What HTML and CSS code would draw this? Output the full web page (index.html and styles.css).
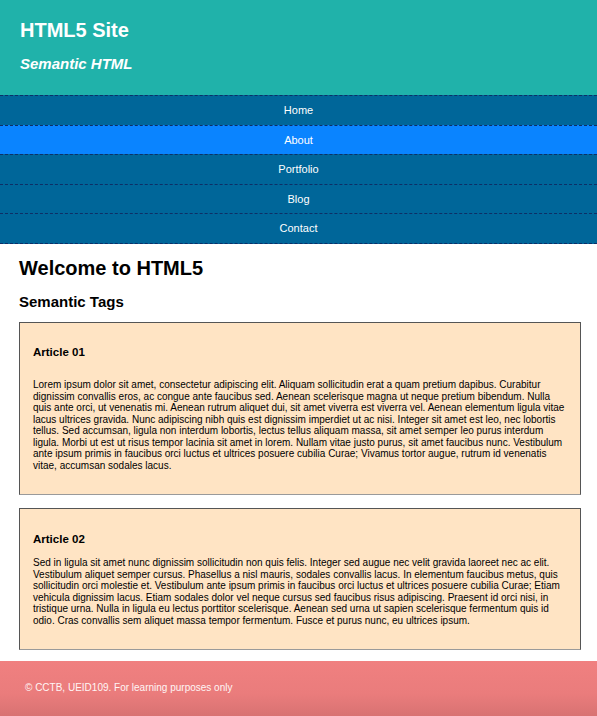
FILE: index.html
```html
<!DOCTYPE html>
<html lang="en">
<head>
<meta charset="utf-8">
<title>HTML5 Site</title>
<link rel="stylesheet" href="styles.css">
</head>
<body>
<header class="site-header">
  <h1 class="site-title">HTML5 Site</h1>
  <h2 class="site-subtitle">Semantic HTML</h2>
</header>
<nav class="site-nav">
  <ul class="nav-list">
    <li class="nav-item"><a class="nav-link" href="#">Home</a></li>
    <li class="nav-item nav-item-active"><a class="nav-link" href="#">About</a></li>
    <li class="nav-item"><a class="nav-link" href="#">Portfolio</a></li>
    <li class="nav-item"><a class="nav-link" href="#">Blog</a></li>
    <li class="nav-item"><a class="nav-link" href="#">Contact</a></li>
  </ul>
</nav>
<main class="content">
  <h1 class="page-title">Welcome to HTML5</h1>
  <h2 class="section-title">Semantic Tags</h2>
  <article class="article">
    <h3 class="article-title article-title-spaced">Article 01</h3>
    <p class="article-text">Lorem ipsum dolor sit amet, consectetur adipiscing elit. Aliquam sollicitudin erat a quam pretium dapibus. Curabitur dignissim convallis eros, ac congue ante faucibus sed. Aenean scelerisque magna ut neque pretium bibendum. Nulla quis ante orci, ut venenatis mi. Aenean rutrum aliquet dui, sit amet viverra est viverra vel. Aenean elementum ligula vitae lacus ultrices gravida. Nunc adipiscing nibh quis est dignissim imperdiet ut ac nisi. Integer sit amet est leo, nec lobortis tellus. Sed accumsan, ligula non interdum lobortis, lectus tellus aliquam massa, sit amet semper leo purus interdum ligula. Morbi ut est ut risus tempor lacinia sit amet in lorem. Nullam vitae justo purus, sit amet faucibus nunc. Vestibulum ante ipsum primis in faucibus orci luctus et ultrices posuere cubilia Curae; Vivamus tortor augue, rutrum id venenatis vitae, accumsan sodales lacus.</p>
  </article>
  <article class="article">
    <h3 class="article-title">Article 02</h3>
    <p class="article-text">Sed in ligula sit amet nunc dignissim sollicitudin non quis felis. Integer sed augue nec velit gravida laoreet nec ac elit. Vestibulum aliquet semper cursus. Phasellus a nisl mauris, sodales convallis lacus. In elementum faucibus metus, quis sollicitudin orci molestie et. Vestibulum ante ipsum primis in faucibus orci luctus et ultrices posuere cubilia Curae; Etiam vehicula dignissim lacus. Etiam sodales dolor vel neque cursus sed faucibus risus adipiscing. Praesent id orci nisi, in tristique urna. Nulla in ligula eu lectus porttitor scelerisque. Aenean sed urna ut sapien scelerisque fermentum quis id odio. Cras convallis sem aliquet massa tempor fermentum. Fusce et purus nunc, eu ultrices ipsum.</p>
  </article>
</main>
<footer class="site-footer">
  <p class="footer-text">&copy; CCTB, UEID109. For learning purposes only</p>
</footer>
</body>
</html>
```
FILE: styles.css
```css
* { box-sizing: border-box; }

html, body {
  margin: 0;
  padding: 0;
  background: #ffffff;
  font-family: "Liberation Sans", Arial, sans-serif;
  color: #000;
}

.site-header {
  background: #20b2aa;
  color: #ffffff;
  padding: 19px 20px 23px;
}

.site-title {
  margin: 0 0 13px;
  font-size: 20px;
  font-weight: bold;
  line-height: 23px;
}

.site-subtitle {
  margin: 0;
  font-size: 15px;
  font-style: italic;
  font-weight: bold;
  line-height: 17px;
}

.site-nav {
  background: #006699;
}

.nav-list {
  list-style: none;
  margin: 0;
  padding: 0;
}

.nav-item {
  border-top: 1px dashed #0d2f66;
  text-align: center;
}

.nav-item:last-child {
  border-bottom: 1px dashed #0d2f66;
}

.nav-item-active {
  background: #0a84ff;
}

.nav-link {
  display: block;
  padding: 8px 0;
  font-size: 11px;
  line-height: 12.6px;
  color: #ffffff;
  text-decoration: none;
}

.content {
  padding: 13px 16px 11px 19px;
}

.page-title {
  margin: 0 0 13px;
  font-size: 20px;
  line-height: 23px;
}

.section-title {
  margin: 0 0 12px;
  font-size: 15px;
  line-height: 17px;
}

.article {
  background: #ffe4c4;
  border: 1px solid #555555;
  border-bottom-color: #9a9a9a;
  padding: 12px 13px 13px;
  margin: 0 0 13px;
}

.article:last-child {
  margin-bottom: 0;
}

.article-title {
  margin: 11.5px 0 11.5px;
  font-size: 11.5px;
  line-height: 13.2px;
}

.article-title-spaced {
  margin-bottom: 19.5px;
}

.article-text {
  margin: 0 0 10px;
  font-size: 10px;
  line-height: 11.5px;
}

.site-footer {
  background: linear-gradient(to bottom, #f08080 0%, #ea7c7c 60%, #d87272 100%);
  color: #fff5f5;
  padding: 21px 25px 22px;
}

.footer-text {
  margin: 0;
  font-size: 10px;
  line-height: 11.5px;
}
```
